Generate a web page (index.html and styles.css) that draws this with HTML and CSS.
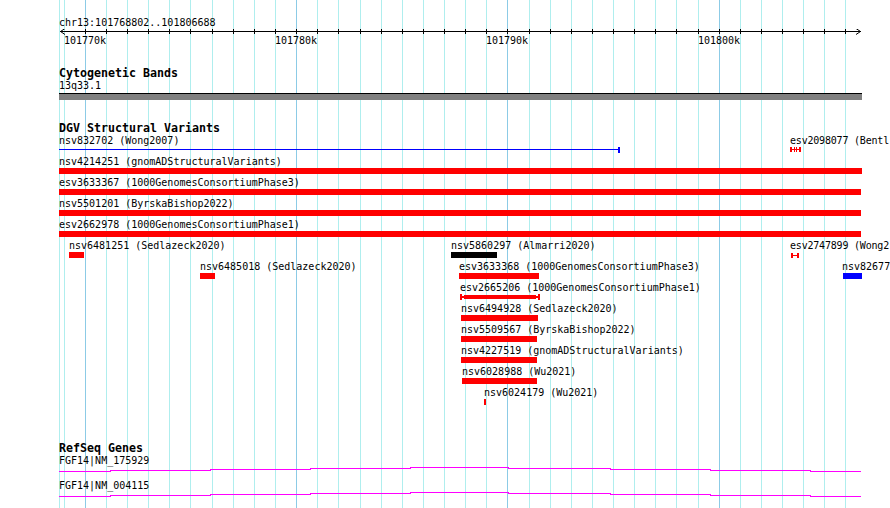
FILE: index.html
```html
<!DOCTYPE html>
<html lang="en">
<head>
    <meta charset="UTF-8">
    <title>chr13:101768802..101806688</title>
    <link rel="stylesheet" href="styles.css">
</head>
<body>
    <div class="browser">
        <!-- grid behind all tracks, one line per kb -->
        <svg class="grid" width="890" height="508" shape-rendering="crispEdges">
            <path class="minor" d="M59.5 0V508M64.5 0V508M106.5 0V508M127.5 0V508M148.5 0V508M169.5 0V508M190.5 0V508M212.5 0V508M233.5 0V508M254.5 0V508M275.5 0V508M317.5 0V508M338.5 0V508M360.5 0V508M381.5 0V508M402.5 0V508M423.5 0V508M444.5 0V508M465.5 0V508M486.5 0V508M529.5 0V508M550.5 0V508M571.5 0V508M592.5 0V508M613.5 0V508M634.5 0V508M655.5 0V508M676.5 0V508M698.5 0V508M740.5 0V508M761.5 0V508M782.5 0V508M803.5 0V508M824.5 0V508M845.5 0V508"/>
            <path class="major" d="M85.5 0V508M296.5 0V508M507.5 0V508M719.5 0V508"/>
        </svg>

        <div class="tracks">
            <div class="region">chr13:101768802..101806688</div>
            <svg class="ruler" width="803" height="20" viewBox="59 0 803 20">
                <path class="axis" shape-rendering="crispEdges" d="M60 2.5H861M85.5 0V5M106.5 0V5M127.5 0V5M148.5 0V5M169.5 0V5M190.5 0V5M212.5 0V5M233.5 0V5M254.5 0V5M275.5 0V5M296.5 0V5M317.5 0V5M338.5 0V5M360.5 0V5M381.5 0V5M402.5 0V5M423.5 0V5M444.5 0V5M465.5 0V5M486.5 0V5M507.5 0V5M529.5 0V5M550.5 0V5M571.5 0V5M592.5 0V5M613.5 0V5M634.5 0V5M655.5 0V5M676.5 0V5M698.5 0V5M719.5 0V5M740.5 0V5M761.5 0V5M782.5 0V5M803.5 0V5M824.5 0V5M845.5 0V5"/>
                <polyline class="axis" points="65,-0.5 60.5,2.5 65,5.5"/>
                <polyline class="axis" points="856,-0.5 860.5,2.5 856,5.5"/>
                <text x="85" y="15">101770k</text>
                <text x="296" y="15">101780k</text>
                <text x="507" y="15">101790k</text>
                <text x="719" y="15">101800k</text>
            </svg>

            <div class="track cyto">
                <div class="track-title">Cytogenetic Bands</div>
                <div class="label">13q33.1</div>
                <div class="band"></div>
            </div>

            <div class="track dgv">
                <div class="track-title">DGV Structural Variants</div>

                <div class="row">
                    <div class="feat" style="left:0px">
                        <div class="label">nsv832702 (Wong2007)</div>
                        <svg class="glyph" width="561" height="6" shape-rendering="crispEdges">
                            <rect class="fill-blue" x="0" y="2" width="561" height="1"/>
                            <rect class="fill-blue" x="559" y="0" width="2" height="6"/>
                        </svg>
                    </div>
                    <div class="feat" style="left:731px">
                        <div class="label edge">esv2098077 (Bentl</div>
                        <svg class="glyph" width="11" height="5" shape-rendering="crispEdges">
                            <rect class="fill-red" x="0" y="0" width="2" height="5"/>
                            <rect class="fill-red" x="4" y="0" width="1" height="5"/>
                            <rect class="fill-red" x="6" y="0" width="1" height="5"/>
                            <rect class="fill-red" x="9" y="0" width="2" height="5"/>
                            <rect class="fill-red" x="0" y="2" width="11" height="1"/>
                        </svg>
                    </div>
                </div>

                <div class="row">
                    <div class="feat" style="left:0px">
                        <div class="label">nsv4214251 (gnomADStructuralVariants)</div>
                        <div class="bar red" style="width:803px"></div>
                    </div>
                </div>

                <div class="row">
                    <div class="feat" style="left:0px">
                        <div class="label">esv3633367 (1000GenomesConsortiumPhase3)</div>
                        <div class="bar red" style="width:802px"></div>
                    </div>
                </div>

                <div class="row">
                    <div class="feat" style="left:0px">
                        <div class="label">nsv5501201 (ByrskaBishop2022)</div>
                        <div class="bar red" style="width:802px"></div>
                    </div>
                </div>

                <div class="row">
                    <div class="feat" style="left:0px">
                        <div class="label">esv2662978 (1000GenomesConsortiumPhase1)</div>
                        <div class="bar red" style="width:802px"></div>
                    </div>
                </div>

                <div class="row">
                    <div class="feat" style="left:10px">
                        <div class="label">nsv6481251 (Sedlazeck2020)</div>
                        <div class="bar red" style="width:15px"></div>
                    </div>
                    <div class="feat" style="left:392px">
                        <div class="label">nsv5860297 (Almarri2020)</div>
                        <div class="bar black" style="width:46px"></div>
                    </div>
                    <div class="feat" style="left:731px">
                        <div class="label edge">esv2747899 (Wong2</div>
                        <svg class="glyph shifted" width="8" height="5" shape-rendering="crispEdges">
                            <rect class="fill-red" x="0" y="0" width="2" height="5"/>
                            <rect class="fill-red" x="6" y="0" width="2" height="5"/>
                            <rect class="fill-red" x="0" y="2" width="8" height="1"/>
                        </svg>
                    </div>
                </div>

                <div class="row">
                    <div class="feat" style="left:141px">
                        <div class="label">nsv6485018 (Sedlazeck2020)</div>
                        <div class="bar red" style="width:15px"></div>
                    </div>
                    <div class="feat" style="left:400px">
                        <div class="label">esv3633368 (1000GenomesConsortiumPhase3)</div>
                        <div class="bar red" style="width:80px"></div>
                    </div>
                    <div class="feat" style="left:783px">
                        <div class="label">nsv82677</div>
                        <div class="bar blue pushed" style="width:19px"></div>
                    </div>
                </div>

                <div class="row">
                    <div class="feat" style="left:401px">
                        <div class="label">esv2665206 (1000GenomesConsortiumPhase1)</div>
                        <svg class="glyph" width="80" height="6" shape-rendering="crispEdges">
                            <rect class="fill-red" x="0" y="2" width="80" height="2"/>
                            <rect class="fill-red" x="4" y="1" width="72" height="4"/>
                            <rect class="fill-red" x="0" y="0" width="2" height="6"/>
                            <rect class="fill-red" x="78" y="0" width="2" height="6"/>
                        </svg>
                    </div>
                </div>

                <div class="row">
                    <div class="feat" style="left:402px">
                        <div class="label">nsv6494928 (Sedlazeck2020)</div>
                        <div class="bar red" style="width:77px"></div>
                    </div>
                </div>

                <div class="row">
                    <div class="feat" style="left:402px">
                        <div class="label">nsv5509567 (ByrskaBishop2022)</div>
                        <div class="bar red" style="width:76px"></div>
                    </div>
                </div>

                <div class="row">
                    <div class="feat" style="left:402px">
                        <div class="label">nsv4227519 (gnomADStructuralVariants)</div>
                        <div class="bar red" style="width:76px"></div>
                    </div>
                </div>

                <div class="row">
                    <div class="feat" style="left:403px">
                        <div class="label">nsv6028988 (Wu2021)</div>
                        <div class="bar red" style="width:75px"></div>
                    </div>
                </div>

                <div class="row">
                    <div class="feat" style="left:425px">
                        <div class="label">nsv6024179 (Wu2021)</div>
                        <div class="bar red" style="width:2px"></div>
                    </div>
                </div>
            </div>

            <div class="track refseq">
                <div class="track-title">RefSeq Genes</div>
                <div class="gene">
                    <div class="label">FGF14|NM_175929</div>
                    <svg width="803" height="5" viewBox="59 0 803 5" shape-rendering="crispEdges">
                        <path class="intron" d="M59 4.5H110.5V3.5H210.5V2.5H310.5V1.5H410.5V0.5H508.5V1.5H610.5V2.5H710.5V3.5H810.5V4.5H861"/>
                    </svg>
                </div>
                <div class="gene">
                    <div class="label">FGF14|NM_004115</div>
                    <svg width="803" height="5" viewBox="59 0 803 5" shape-rendering="crispEdges">
                        <path class="intron" d="M59 4.5H110.5V3.5H210.5V2.5H310.5V1.5H410.5V0.5H508.5V1.5H610.5V2.5H710.5V3.5H810.5V4.5H861"/>
                    </svg>
                </div>
            </div>
        </div>
    </div>
</body>
</html>
```

FILE: styles.css
```css
body {
    margin: 0;
    background-color: #fff;
    color: #000;
    font-family: "DejaVu Sans Mono", monospace;
    font-size: 10px;
}
.browser {
    position: relative;
    width: 890px;
    height: 508px;
    overflow: hidden;
}
.grid {
    position: absolute;
    left: 0;
    top: 0;
}
.grid path {
    fill: none;
    stroke-width: 1;
}
.grid .minor {
    stroke: #afeeee;
}
.grid .major {
    stroke: #8ccbe6;
}
.tracks {
    position: relative;
    width: 803px;
    padding: 16px 0 0 59px;
}
.region,
.label {
    line-height: 13px;
    white-space: nowrap;
}
.label.edge {
    letter-spacing: -0.2px; /* keep the clipped names inside the frame */
}
.ruler {
    display: block;
}
.ruler .axis {
    fill: none;
    stroke: #000;
    stroke-width: 1;
}
.ruler text {
    font-family: "DejaVu Sans Mono", monospace;
    font-size: 10px;
    text-anchor: middle;
    fill: #000;
}
.track-title {
    font-weight: bold;
    font-size: 11.63px;
    line-height: 12px;
    white-space: nowrap;
}
.cyto {
    margin-top: 18px;
}
.band {
    margin-top: 1px;
    width: 803px;
    height: 6px;
    border-top: 1px solid #000;
    background-color: #808080;
}
.dgv {
    margin-top: 22px;
}
.row {
    position: relative;
    height: 21px;
}
.feat {
    position: absolute;
    top: 0;
}
.bar {
    height: 6px;
}
.bar.pushed {
    margin-left: 1px;
}
.glyph {
    display: block;
}
.glyph.shifted {
    margin: 1px 0 0 1px;
}
.red { background-color: #f00; }
.blue { background-color: #00f; }
.black { background-color: #000; }
.fill-red { fill: #f00; }
.fill-blue { fill: #00f; }
.refseq {
    margin-top: 35px;
}
.gene svg {
    display: block;
}
.gene + .gene {
    margin-top: 7px;
}
.intron {
    fill: none;
    stroke: #f0f;
    stroke-width: 1;
}
```
